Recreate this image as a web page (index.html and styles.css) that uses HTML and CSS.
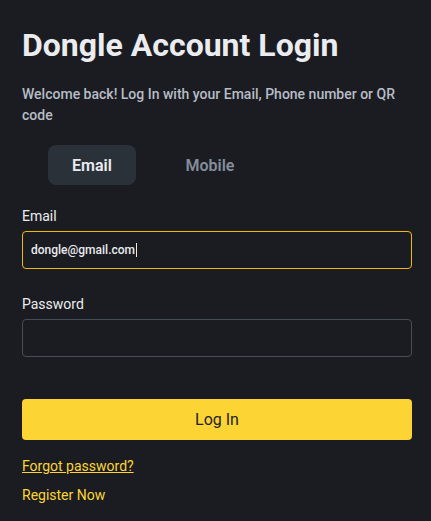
FILE: index.html
```html
<!DOCTYPE html>
<html lang="en">
<head>
<meta charset="utf-8">
<title>Dongle Account Login</title>
<link rel="stylesheet" href="styles.css">
</head>
<body>
<main class="login">
  <h1 class="title">Dongle Account Login</h1>
  <p class="subtitle">Welcome back! Log In with your Email, Phone number or QR code</p>
  <div class="tabs">
    <button class="tab tab-active" type="button">Email</button>
    <button class="tab" type="button">Mobile</button>
  </div>
  <form class="form">
    <div class="field">
      <label class="label" for="email">Email</label>
      <div class="input input-focus"><span class="value">dongle@gmail.com</span><span class="caret"></span></div>
    </div>
    <div class="field">
      <label class="label" for="password">Password</label>
      <div class="input"></div>
    </div>
    <button class="submit" type="button">Log In</button>
  </form>
  <a class="link link-underline" href="#">Forgot password?</a>
  <a class="link" href="#">Register Now</a>
</main>
</body>
</html>
```
FILE: styles.css
```css
html, body {
  margin: 0;
  padding: 0;
  background: #1b1c21;
}
body {
  font-family: Roboto, "Liberation Sans", sans-serif;
  color: #eaecef;
}
.login {
  width: 390px;
  padding: 24px 0 0 22px;
  display: flex;
  flex-direction: column;
}
.title {
  margin: 0;
  font-size: 32px;
  line-height: 42px;
  font-weight: 700;
  color: #eaecef;
}
.subtitle {
  margin: 18px 0 0;
  font-size: 14px;
  line-height: 21px;
  font-weight: 500;
  color: #b7bdc6;
}
.tabs {
  display: flex;
  margin: 19px 0 0 26px;
}
.tab {
  width: 88px;
  height: 40px;
  border: none;
  border-radius: 8px;
  background: transparent;
  font-family: inherit;
  font-size: 16px;
  font-weight: 600;
  color: #848e9c;
  padding: 0;
  margin-right: 30px;
}
.tab-active {
  background: #2b3139;
  color: #eaecef;
}
.form {
  display: flex;
  flex-direction: column;
  margin-top: 21px;
}
.field {
  display: flex;
  flex-direction: column;
  margin-bottom: 25px;
}
.label {
  font-size: 14px;
  line-height: 20px;
  margin-bottom: 5px;
  color: #eaecef;
}
.input {
  height: 36px;
  border: 1px solid #474d57;
  border-radius: 4px;
  display: flex;
  align-items: center;
  padding: 0 8px;
}
.input-focus {
  border-color: #f0b90b;
}
.value {
  font-size: 12px;
  font-weight: 500;
  color: #eaecef;
}
.caret {
  width: 1px;
  height: 14px;
  background: #eaecef;
  margin-left: 1px;
}
.submit {
  margin-top: 17px;
  height: 41px;
  border: none;
  border-radius: 4px;
  background: #fcd535;
  font-family: inherit;
  font-size: 16px;
  color: #1e2329;
}
.link {
  align-self: flex-start;
  font-size: 14px;
  line-height: 20px;
  color: #fcd535;
  text-decoration: none;
}
.link-underline {
  margin-top: 16px;
  text-decoration: underline;
  margin-bottom: 9px;
}
```
